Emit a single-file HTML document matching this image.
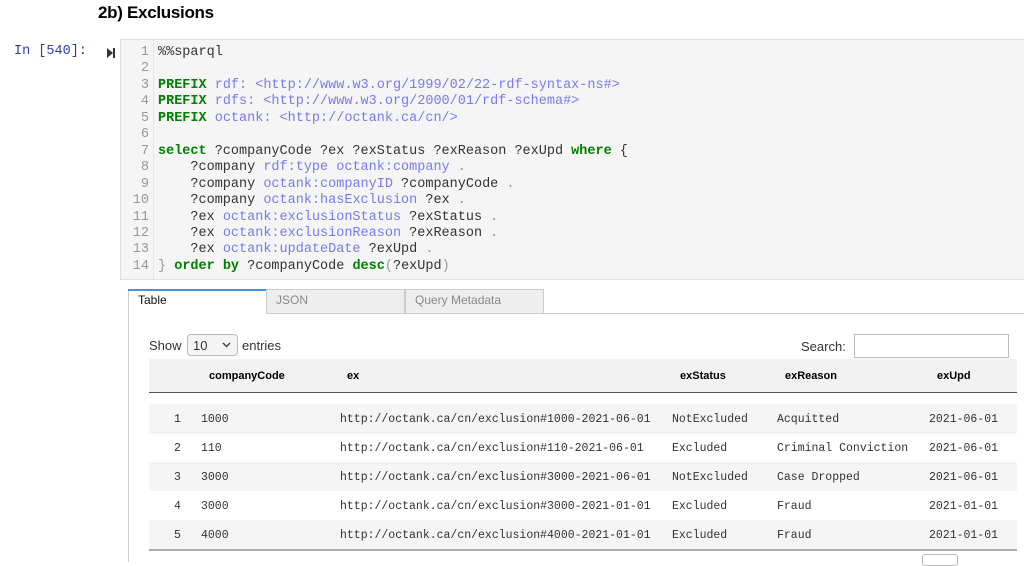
<!DOCTYPE html>
<html><head><meta charset="utf-8"><style>
*{margin:0;padding:0;box-sizing:border-box}
body{width:1024px;height:562px;overflow:hidden;background:#fff;font-family:"Liberation Sans",sans-serif;position:relative;color:#000}
.a{position:absolute;white-space:pre}
h2{position:absolute;left:98px;top:3px;font-size:17px;font-weight:bold;letter-spacing:-0.3px}
.prompt{position:absolute;left:14px;top:44px;font:13.5px "Liberation Mono",monospace;color:#303f9f}
.code{position:absolute;left:120px;top:39px;width:904px;height:241px;background:#f5f5f5;border:1px solid #e0e0e0;border-right:none}
.gut{position:absolute;left:0;top:0;width:33px;height:100%;border-right:1px solid #e6e6e6;background:#f5f5f5}
.ln{position:absolute;left:0;top:5px;width:28px;text-align:right;font:13.5px/16.46px "Liberation Mono",monospace;color:#999;white-space:pre}
.src{position:absolute;left:37px;top:5px;font:13.5px/16.46px "Liberation Mono",monospace;color:#333;white-space:pre}
.k{color:#008000;font-weight:bold}.u{color:#7a7aee}.p{color:#999}
.mono{font:11.5px "Liberation Mono",monospace;color:#333}
.hd{font-size:11px;font-weight:bold}
</style></head><body>
<h2>2b) Exclusions</h2>
<div class="prompt">In [540]:</div>
<svg class="a" style="left:106px;top:47px" width="10" height="12"><path d="M1 1 L7 6 L1 11Z" fill="#333"/><rect x="7" y="1" width="2" height="10" fill="#333"/></svg>
<div class="code"><div class="gut"><div class="ln">1
2
3
4
5
6
7
8
9
10
11
12
13
14</div></div>
<div class="src">%%sparql

<span class="k">PREFIX</span> <span class="u">rdf: &lt;http://www.w3.org/1999/02/22-rdf-syntax-ns#&gt;</span>
<span class="k">PREFIX</span> <span class="u">rdfs: &lt;http://www.w3.org/2000/01/rdf-schema#&gt;</span>
<span class="k">PREFIX</span> <span class="u">octank: &lt;http://octank.ca/cn/&gt;</span>

<span class="k">select</span> ?companyCode ?ex ?exStatus ?exReason ?exUpd <span class="k">where</span> {
    ?company <span class="u">rdf:type octank:company</span> <span class="p">.</span>
    ?company <span class="u">octank:companyID</span> ?companyCode <span class="p">.</span>
    ?company <span class="u">octank:hasExclusion</span> ?ex <span class="p">.</span>
    ?ex <span class="u">octank:exclusionStatus</span> ?exStatus <span class="p">.</span>
    ?ex <span class="u">octank:exclusionReason</span> ?exReason <span class="p">.</span>
    ?ex <span class="u">octank:updateDate</span> ?exUpd <span class="p">.</span>
<span class="p">}</span> <span class="k">order by</span> ?companyCode <span class="k">desc</span><span class="p">(</span>?exUpd<span class="p">)</span></div></div>

<div class="a" style="left:128px;top:289px;width:1px;height:273px;background:#ccc"></div>
<div class="a" style="left:266px;top:313px;width:758px;height:1px;background:#ccc"></div>
<div class="a" style="left:128px;top:289px;width:138px;height:2px;background:#4a90e2"></div>
<div class="a" style="left:138px;top:293px;font-size:12px;color:#111">Table</div>
<div class="a" style="left:266px;top:289px;width:139px;height:25px;background:#eee;border:1px solid #ccc"></div>
<div class="a" style="left:276px;top:293px;font-size:12px;color:#888">JSON</div>
<div class="a" style="left:405px;top:289px;width:139px;height:25px;background:#eee;border:1px solid #ccc"></div>
<div class="a" style="left:415px;top:293px;font-size:12px;color:#888">Query Metadata</div>

<div class="a" style="left:149px;top:338px;font-size:13px;color:#333">Show</div>
<div class="a" style="left:187px;top:334px;width:51px;height:22px;border:1px solid #bbb;border-radius:4px;background:#f4f4f4"></div>
<div class="a" style="left:193px;top:338px;font-size:13px;color:#333">10</div>
<svg class="a" style="left:222px;top:342px" width="9" height="6"><path d="M1 1L4.5 4.5L8 1" stroke="#333" stroke-width="1.3" fill="none"/></svg>
<div class="a" style="left:242px;top:338px;font-size:13px;color:#333">entries</div>
<div class="a" style="left:801px;top:339px;font-size:13px;color:#333">Search:</div>
<div class="a" style="left:854px;top:334px;width:155px;height:24px;border:1px solid #bbb"></div>

<div class="a" style="left:149px;top:359px;width:868px;height:34px;background:#f2f2f2;border-bottom:1px solid #555"></div>
<div class="a hd" style="left:209px;top:370px">companyCode</div>
<div class="a hd" style="left:347px;top:370px">ex</div>
<div class="a hd" style="left:680px;top:370px">exStatus</div>
<div class="a hd" style="left:785px;top:370px">exReason</div>
<div class="a hd" style="left:937px;top:370px">exUpd</div>

<div class="a" style="left:149px;top:404px;width:868px;height:30px;background:#f5f5f5"></div>
<div class="a" style="left:149px;top:462px;width:868px;height:29px;background:#f5f5f5"></div>
<div class="a" style="left:149px;top:520px;width:868px;height:29px;background:#f5f5f5"></div>
<div class="a" style="left:149px;top:549px;width:868px;height:2px;background:#aaa"></div>

<div class="a mono" style="left:174px;top:405px;line-height:29px">1
2
3
4
5</div>
<div class="a mono" style="left:201px;top:405px;line-height:29px">1000
110
3000
3000
4000</div>
<div class="a mono" style="left:340px;top:405px;line-height:29px">http://octank.ca/cn/exclusion#1000-2021-06-01
http://octank.ca/cn/exclusion#110-2021-06-01
http://octank.ca/cn/exclusion#3000-2021-06-01
http://octank.ca/cn/exclusion#3000-2021-01-01
http://octank.ca/cn/exclusion#4000-2021-01-01</div>
<div class="a mono" style="left:672px;top:405px;line-height:29px">NotExcluded
Excluded
NotExcluded
Excluded
Excluded</div>
<div class="a mono" style="left:777px;top:405px;line-height:29px">Acquitted
Criminal Conviction
Case Dropped
Fraud
Fraud</div>
<div class="a mono" style="left:929px;top:405px;line-height:29px">2021-06-01
2021-06-01
2021-06-01
2021-01-01
2021-01-01</div>
<div class="a" style="left:922px;top:554px;width:36px;height:12px;border:1px solid #bbb;border-radius:3px"></div>
</body></html>
